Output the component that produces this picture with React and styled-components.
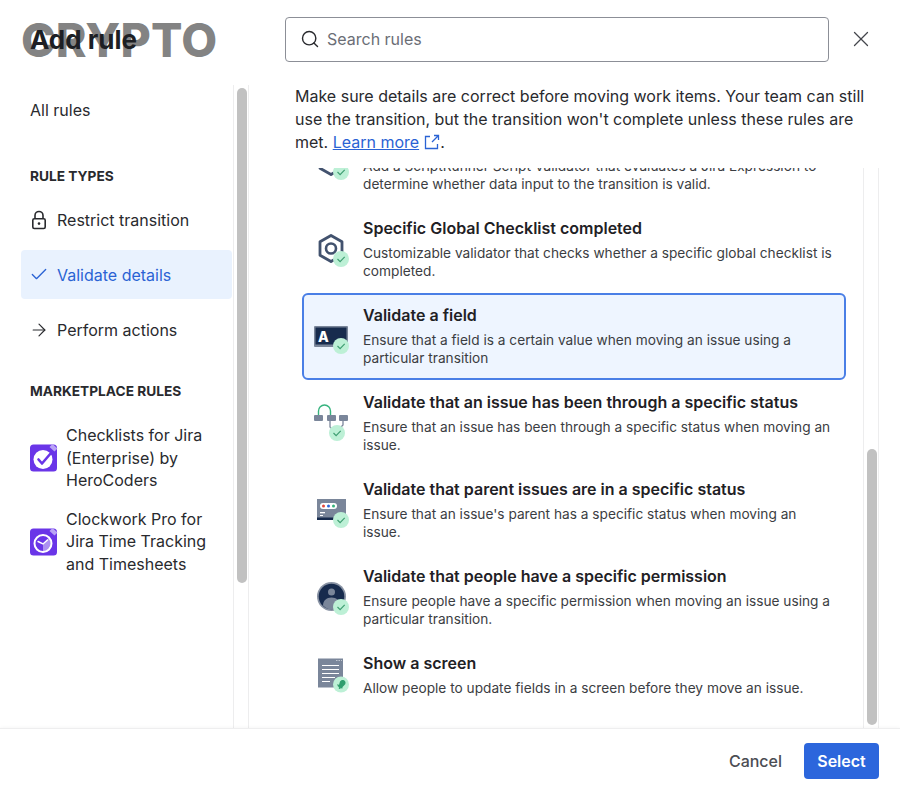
import styled, { createGlobalStyle } from "styled-components";
import { ArrowRight, Check, Search, X } from "lucide-react";

const GlobalStyle = createGlobalStyle`
  html, body {
    margin: 0;
    background: #fff;
  }
  * {
    box-sizing: border-box;
  }
  body {
    font-family: Inter, "Liberation Sans", sans-serif;
    color: #292a2e;
  }
`;

const Dialog = styled.div`
  position: relative;
  width: 900px;
  height: 786px;
  display: flex;
  flex-direction: column;
  overflow: hidden;
`;

const Watermark = styled.div`
  position: absolute;
  left: 21px;
  top: 12px;
  font-size: 46.5px;
  line-height: 56px;
  font-weight: 800;
  letter-spacing: 0.2px;
  color: rgba(90, 90, 90, 0.76);
  pointer-events: none;
`;

const Header = styled.header`
  height: 85px;
  flex: none;
  display: grid;
  grid-template-columns: 285px 544px 1fr;
  padding-top: 17px;
  align-items: start;
`;

const Title = styled.h1`
  position: relative;
  z-index: 1;
  margin: 0;
  padding-left: 30px;
  font-size: 26px;
  line-height: 45px;
  font-weight: 650;
  color: #1d1f24;
`;

const SearchBox = styled.div`
  height: 45px;
  border: 1px solid #8c8f97;
  border-radius: 4px;
  display: flex;
  align-items: center;
  gap: 7px;
  padding: 0 0 2px 14px;
  font-size: 16px;
  color: #6b6e76;
  svg {
    color: #292a2e;
  }
`;

const CloseButton = styled.div`
  height: 45px;
  display: flex;
  align-items: center;
  justify-content: center;
  padding: 0 7px 1px 0;
  color: #44464c;
`;

const Body = styled.div`
  flex: 1;
  min-height: 0;
  display: flex;
`;

const Sidebar = styled.nav`
  width: 234px;
  flex: none;
  border-right: 1px solid #ededee;
  padding: 0 1px 0 21px;
`;

const AllRules = styled.div`
  padding: 12px 0 0 9px;
  font-size: 16px;
  line-height: 26px;
`;

const SectionLabel = styled.div`
  padding-left: 9px;
  margin-top: ${(p) => p.$top}px;
  margin-bottom: ${(p) => p.$bottom}px;
  font-size: 13.7px;
  line-height: 18px;
  font-weight: 650;
  color: #292a2e;
`;

const NavItem = styled.div`
  height: 49px;
  margin-bottom: 6px;
  display: flex;
  align-items: center;
  padding-left: 8px;
  border-radius: 4px;
  font-size: 16px;
  background: ${(p) => (p.$active ? "#e9f2fe" : "transparent")};
  color: ${(p) => (p.$active ? "#2a63d4" : "#292a2e")};
`;

const NavGlyph = styled.span`
  width: 28px;
  flex: none;
  display: flex;
  justify-content: center;
  margin-right: 0;
  padding-right: 8px;
`;

const AppItem = styled.div`
  display: flex;
  align-items: center;
  gap: 8px;
  padding-left: 9px;
  margin-bottom: 16px;
  font-size: 16px;
  line-height: 22.6px;
  color: #292a2e;
`;

const ScrollTrack = styled.div`
  width: ${(p) => p.$width}px;
  flex: none;
  padding: ${(p) => p.$offset}px 2px 0 3px;
`;

const ScrollThumb = styled.div`
  width: 10px;
  height: ${(p) => p.$height}px;
  border-radius: 5px;
  background: #c1c1c1;
`;

const Main = styled.main`
  width: 631px;
  flex: none;
  border-left: 1px solid #ededee;
  display: flex;
  flex-direction: column;
`;

const Intro = styled.p`
  margin: 0;
  height: 83px;
  padding: 0 0 0 46px;
  width: 622px;
  font-size: 16px;
  line-height: 23px;
  color: #292a2e;
`;

const LearnMore = styled.a`
  color: #2a63d4;
  text-decoration: underline;
  svg {
    margin: 0 0 -2px 5px;
  }
`;

const ListArea = styled.div`
  flex: 1;
  min-height: 0;
  display: flex;
  border-right: 1px solid #ededee;
`;

const RuleList = styled.div`
  flex: 1;
  min-width: 0;
  overflow: hidden;
  border-right: 1px solid #ededee;
  padding: 0 17px 0 53px;
`;

const Rule = styled.div`
  display: grid;
  grid-template-columns: 44px 1fr;
  column-gap: 9px;
  align-items: center;
  margin-top: ${(p) => (p.$clipped ? "-49px" : "0")};
  padding: 10px 6px 11px 6px;
  border: 2px solid ${(p) => (p.$selected ? "#4a7fe6" : "transparent")};
  border-radius: 6px;
  background: ${(p) => (p.$selected ? "#eef5ff" : "transparent")};
`;

const RuleName = styled.div`
  font-size: 16px;
  line-height: 20px;
  font-weight: 600;
  color: #1f2125;
  margin-bottom: 6px;
`;

const RuleText = styled.div`
  font-size: 13.7px;
  line-height: 18px;
  color: #3b3d42;
`;

const Footer = styled.footer`
  height: 58px;
  flex: none;
  border-top: 1px solid #eeeeef;
  box-shadow: 0 -1px 3px rgba(0, 0, 0, 0.03);
  background: #fff;
  display: flex;
  justify-content: flex-end;
  align-items: flex-start;
  gap: 22px;
  padding: 14px 21px 0 0;
`;

const CancelButton = styled.div`
  height: 36px;
  display: flex;
  align-items: center;
  font-size: 16px;
  font-weight: 500;
  color: #4b4d53;
`;

const SelectButton = styled.div`
  width: 75px;
  height: 36px;
  border-radius: 4px;
  background: #2c66dc;
  color: #fff;
  display: flex;
  align-items: center;
  justify-content: center;
  font-size: 16px;
  font-weight: 600;
`;

const Badge = ({ x = 31, y = 32, plain }) => (
  <g>
    <circle cx={x} cy={y} r="8" fill="#bdf0d6" />
    {!plain && (
      <path d={`M${x - 3.5} ${y}l2.6 2.6 4.6-4.800`} fill="none" stroke="#3f9e72" strokeWidth="1.200" />
    )}
  </g>
);

const IconFrame = ({ children }) => (
  <svg width="44" height="44" viewBox="0 0 44 44">
    {children}
  </svg>
);

const HexIcon = () => (
  <IconFrame>
    <path d="M21 8.500 32 14.800v13.400L21 34.500 10 28.200V14.800z" fill="none" stroke="#42526e" strokeWidth="2.800" strokeLinejoin="round" />
    <circle cx="21" cy="21.500" r="5" fill="none" stroke="#42526e" strokeWidth="2.600" />
    <Badge />
  </IconFrame>
);

const FieldIcon = () => (
  <IconFrame>
    <rect x="4" y="12" width="34" height="21" rx="1" fill="#7a869a" />
    <rect x="5.500" y="13.500" width="31" height="17" fill="#172b4d" />
    <text x="8" y="27.500" fontFamily="Inter, sans-serif" fontSize="14" fontWeight="800" fill="#fff">A</text>
    <Badge />
  </IconFrame>
);

const StatusIcon = () => (
  <IconFrame>
    <path d="M8.500 14v-4a6 6 0 0 1 12 0v4" fill="none" stroke="#36b37e" strokeWidth="1.400" />
    <rect x="4" y="14" width="9" height="6" rx="1" fill="#7a869a" />
    <rect x="17" y="14" width="9" height="6" rx="1" fill="#7a869a" />
    <rect x="29" y="14" width="9" height="6" rx="1" fill="#7a869a" />
    <path d="M20 20v6l3 3M33 20v4l-3 3" fill="none" stroke="#7a869a" strokeWidth="1.300" />
    <Badge x={27} />
  </IconFrame>
);

const ParentIcon = () => (
  <IconFrame>
    <rect x="7" y="11" width="29" height="21" fill="#7a869a" />
    <rect x="7" y="29.500" width="29" height="2.500" fill="#172b4d" />
    <rect x="10" y="15" width="17" height="6" rx="3" fill="#fff" />
    <circle cx="13.500" cy="18" r="1.500" fill="#e5493a" />
    <circle cx="18.500" cy="18" r="1.500" fill="#2c66dc" />
    <circle cx="23.500" cy="18" r="1.500" fill="#36b37e" />
    <rect x="10" y="24" width="5" height="1.300" fill="#fff" />
    <rect x="10" y="27" width="3" height="1" fill="#fff" />
    <Badge />
  </IconFrame>
);

const PersonIcon = () => (
  <IconFrame>
    <circle cx="21.500" cy="21.500" r="14.500" fill="#8993a4" />
    <circle cx="21.500" cy="21.500" r="12.800" fill="#172b4d" />
    <circle cx="21.500" cy="17" r="3.500" fill="#7a869a" />
    <path d="M13 30.500c0-5 3.500-8 8.500-8s8.500 3 8.500 8c-2.500 2.500-5.500 4-8.500 4s-6-1.500-8.500-4z" fill="#7a869a" />
    <Badge />
  </IconFrame>
);

const ScreenIcon = () => (
  <IconFrame>
    <rect x="8" y="5.500" width="25" height="29" fill="#7a869a" />
    <path d="M12 12.500h17M12 16.500h17M12 20.500h17M12 24.500h13M12 28.500h8" stroke="#fff" strokeWidth="1" />
    <path d="M26 7.500h6" stroke="#c1c7d0" strokeWidth="1" strokeDasharray="1.500 1" />
    <Badge y={31.500} />
    <path d="M27.500 33l1.500-1 1-3.500c.8-1.500 2.500-2 4-1.300s2 2.500 1.200 4l-2.600 2.700-.4 1.800z" fill="#2f9e6e" />
    <circle cx="29.700" cy="35" r="1" fill="#2f9e6e" />
  </IconFrame>
);

const LockIcon = () => (
  <svg width="16" height="20" viewBox="0 0 16 20" fill="none" stroke="currentColor" strokeWidth="1.600">
    <path d="M4 9V5.500a4 4 0 0 1 8 0V9" />
    <rect x="1.800" y="8.800" width="12.400" height="9.700" rx="1.500" />
    <circle cx="8" cy="13.600" r="1.300" fill="currentColor" stroke="none" />
  </svg>
);

const AppBadge = ({ children }) => (
  <svg width="28" height="28" viewBox="0 0 28 28" style={{ flex: "none" }}>
    <rect x="0" y="0.500" width="27" height="27" rx="3.500" fill="#6a35e8" />
    <path d="M19.500 3l3-3 5 4.500-3 3z" fill="#b9a3f5" />
    {children}
  </svg>
);

const ChecklistLogo = () => (
  <AppBadge>
    <circle cx="13" cy="15.500" r="9.500" fill="#fff" />
    <path d="M8.500 15.500l3.500 4 9-10.500" fill="none" stroke="#6a35e8" strokeWidth="2.600" strokeLinecap="round" strokeLinejoin="round" />
  </AppBadge>
);

const ClockLogo = () => (
  <AppBadge>
    <circle cx="13" cy="15.500" r="8.500" fill="none" stroke="#fff" strokeWidth="2" />
    <path d="M21.500 15.500a8.500 8.500 0 0 1-8.500 8.500L13 15.500l6-6a8.500 8.500 0 0 1 2.500 6z" fill="#fff" opacity="0.45" />
    <path d="M8 13.500l5 2.500 4.500-4" fill="none" stroke="#fff" strokeWidth="1.400" strokeLinecap="round" />
  </AppBadge>
);

const ExternalIcon = () => (
  <svg width="16" height="16" viewBox="0 0 16 16" fill="none" stroke="currentColor" strokeWidth="1.300">
    <path d="M6 2.500H1.500v12h12V10" />
    <path d="M8 8l6.500-6.500M10 1.500h4.500V6" />
  </svg>
);

const rules = [
  {
    name: "ScriptRunner Script Validator",
    text: "Add a ScriptRunner Script Validator that evaluates a Jira Expression to determine whether data input to the transition is valid.",
    Icon: HexIcon,
    clipped: true,
  },
  {
    name: "Specific Global Checklist completed",
    text: "Customizable validator that checks whether a specific global checklist is completed.",
    Icon: HexIcon,
  },
  {
    name: "Validate a field",
    text: "Ensure that a field is a certain value when moving an issue using a particular transition",
    Icon: FieldIcon,
    selected: true,
  },
  {
    name: "Validate that an issue has been through a specific status",
    text: "Ensure that an issue has been through a specific status when moving an issue.",
    Icon: StatusIcon,
  },
  {
    name: "Validate that parent issues are in a specific status",
    text: "Ensure that an issue's parent has a specific status when moving an issue.",
    Icon: ParentIcon,
  },
  {
    name: "Validate that people have a specific permission",
    text: "Ensure people have a specific permission when moving an issue using a particular transition.",
    Icon: PersonIcon,
  },
  {
    name: "Show a screen",
    text: "Allow people to update fields in a screen before they move an issue.",
    Icon: ScreenIcon,
  },
];

const App = () => {
  return (
    <Dialog>
      <GlobalStyle />
      <Watermark>CRYPTO</Watermark>
      <Header>
        <Title>Add rule</Title>
        <SearchBox>
          <Search size={20} strokeWidth={1.7} />
          Search rules
        </SearchBox>
        <CloseButton>
          <X size={26} strokeWidth={1.2} />
        </CloseButton>
      </Header>

      <Body>
        <Sidebar>
          <AllRules>All rules</AllRules>
          <SectionLabel $top={44} $bottom={10}>RULE TYPES</SectionLabel>
          <NavItem>
            <NavGlyph><LockIcon /></NavGlyph>
            Restrict transition
          </NavItem>
          <NavItem $active>
            <NavGlyph><Check size={21} strokeWidth={1.6} /></NavGlyph>
            Validate details
          </NavItem>
          <NavItem>
            <NavGlyph><ArrowRight size={24} strokeWidth={1.4} /></NavGlyph>
            Perform actions
          </NavItem>
          <SectionLabel $top={28} $bottom={24}>MARKETPLACE RULES</SectionLabel>
          <AppItem>
            <ChecklistLogo />
            <span>Checklists for Jira (Enterprise) by HeroCoders</span>
          </AppItem>
          <AppItem>
            <ClockLogo />
            <span>Clockwork Pro for Jira Time Tracking and Timesheets</span>
          </AppItem>
        </Sidebar>
        <ScrollTrack $width={14} $offset={3}>
          <ScrollThumb $height={495} />
        </ScrollTrack>

        <Main>
          <Intro>
            Make sure details are correct before moving work items. Your team can still use the
            transition, but the transition won't complete unless these rules are met.{" "}
            <LearnMore>
              Learn more
              <ExternalIcon />
            </LearnMore>
            .
          </Intro>
          <ListArea>
            <RuleList>
              {rules.map(({ name, text, Icon, selected, clipped }) => (
                <Rule key={name} $selected={selected} $clipped={clipped}>
                  <Icon />
                  <div>
                    <RuleName>{name}</RuleName>
                    <RuleText>{text}</RuleText>
                  </div>
                </Rule>
              ))}
            </RuleList>
            <ScrollTrack $width={14} $offset={281}>
              <ScrollThumb $height={276} />
            </ScrollTrack>
          </ListArea>
        </Main>
      </Body>

      <Footer>
        <CancelButton>Cancel</CancelButton>
        <SelectButton>Select</SelectButton>
      </Footer>
    </Dialog>
  );
};

export default App;
